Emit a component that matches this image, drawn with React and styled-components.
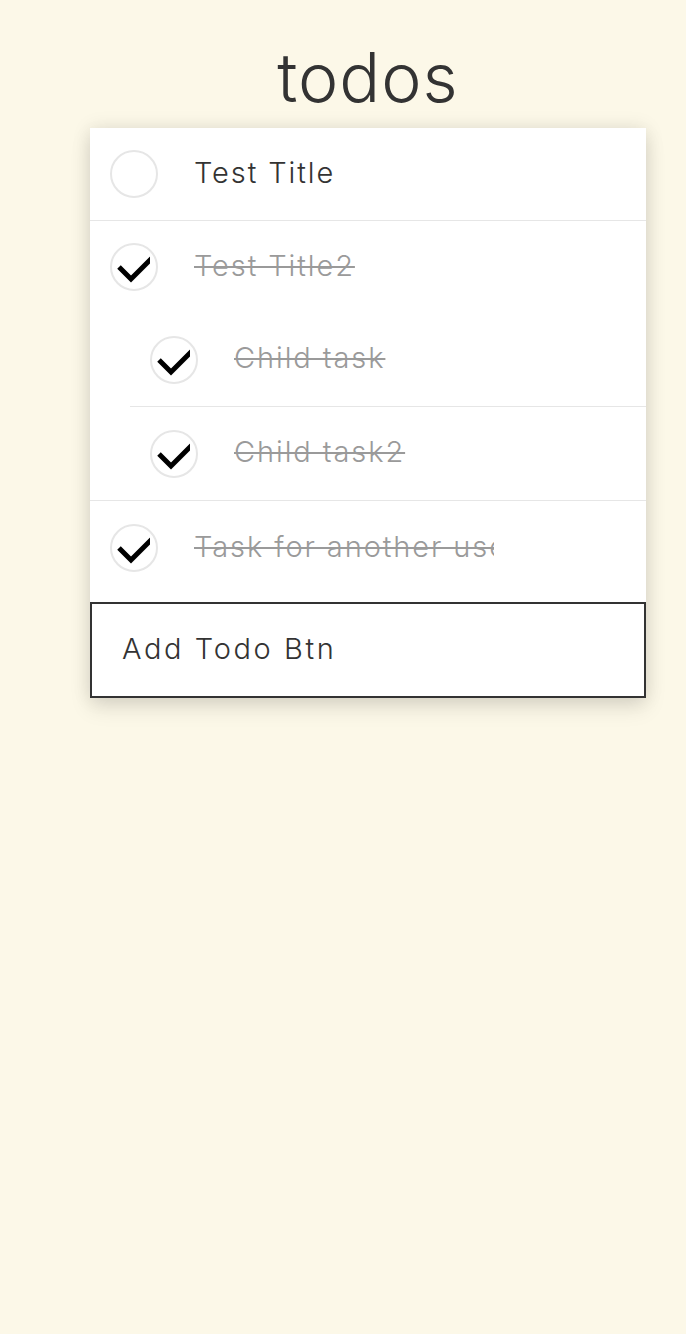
import React from "react";
import styled, { createGlobalStyle } from "styled-components";

const GlobalStyle = createGlobalStyle`
  html, body {
    margin: 0;
    padding: 0;
    background: #fcf8e8;
    font-family: "Inter", "Noto Sans", sans-serif;
    color: #333;
  }
`;

const Page = styled.div`
  min-height: 1334px;
  display: flex;
  flex-direction: column;
  align-items: center;
  padding: 0 40px 0 90px;
  box-sizing: border-box;
`;

const Title = styled.h1`
  margin: 36px 0 10px 0;
  font-size: 68px;
  font-weight: 300;
  line-height: 82px;
  color: #333;
  letter-spacing: 1px;
`;

const Card = styled.div`
  width: 556px;
  background: #fff;
  box-shadow: 0 0 18px rgba(0, 0, 0, 0.1), 0 10px 20px rgba(0, 0, 0, 0.1);
`;

const List = styled.ul`
  list-style: none;
  margin: 0;
  padding: 0 0 7px 0;
`;

const Item = styled.li`
  border-bottom: ${(p) => (p.$last ? "none" : "1px solid #e6e6e6")};
`;

const Row = styled.div`
  display: flex;
  align-items: center;
  height: ${(p) => p.$height || 92}px;
  padding-left: 20px;
`;

const Children = styled.ul`
  list-style: none;
  margin: 0 0 0 40px;
  padding: 0;
`;

const Toggle = styled.span`
  position: relative;
  flex: none;
  width: 44px;
  height: 44px;
  border: 2px solid #e6e6e6;
  border-radius: 50%;
  overflow: hidden;
`;

const CheckSvg = styled.svg`
  position: absolute;
  left: -2px;
  top: -2px;
`;

// long titles are cut at a fixed width, as in the app
const Label = styled.span`
  margin-left: 36px;
  width: 300px;
  overflow: hidden;
  white-space: nowrap;
  font-size: 29px;
  font-weight: 300;
  letter-spacing: 1.9px;
  margin-top: -4px;
  color: ${(p) => (p.$done ? "#9a9a9a" : "#333")};
  text-decoration: ${(p) => (p.$done ? "line-through" : "none")};
  text-decoration-thickness: 2px;
`;

const AddButton = styled.button`
  display: block;
  width: 100%;
  height: 96px;
  margin: 0;
  padding: 0 0 4px 30px;
  text-align: left;
  background: #fff;
  border: 2px solid #333;
  font-family: "Inter", "Noto Sans", sans-serif;
  font-size: 29px;
  font-weight: 300;
  letter-spacing: 2.6px;
  color: #333;
  cursor: pointer;
`;

function Check({ done }) {
  return (
    <Toggle>
      {done && (
        <CheckSvg width="40" height="48" viewBox="0 0 40 48">
          <polyline
            points="9,24 21,36 46,11"
            fill="none"
            stroke="#000"
            strokeWidth="5"
          />
        </CheckSvg>
      )}
    </Toggle>
  );
}

function TodoRow({ title, done, height }) {
  return (
    <Row $height={height}>
      <Check done={done} />
      <Label $done={done}>{title}</Label>
    </Row>
  );
}

export default function App() {
  return (
    <>
      <GlobalStyle />
      <Page>
        <Title>todos</Title>
        <Card>
          <List>
            <Item>
              <TodoRow title="Test Title" />
            </Item>
            <Item>
              <TodoRow title="Test Title2" done height={92} />
              <Children>
                <Item>
                  <TodoRow title="Child task" done height={93} />
                </Item>
                <Item $last>
                  <TodoRow title="Child task2" done height={93} />
                </Item>
              </Children>
            </Item>
            <Item $last>
              <TodoRow title="Task for another user" done height={94} />
            </Item>
          </List>
          <AddButton>Add Todo Btn</AddButton>
        </Card>
      </Page>
    </>
  );
}
